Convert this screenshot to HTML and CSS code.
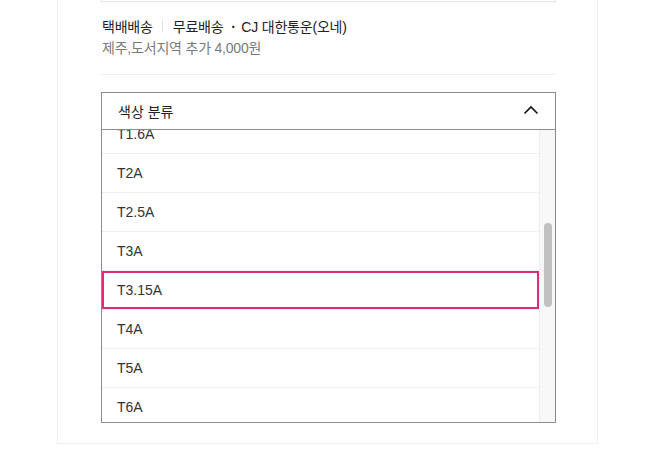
FILE: index.html
```html
<!DOCTYPE html>
<html lang="ko">
<head>
<meta charset="utf-8">
<link rel="stylesheet" href="styles.css">
</head>
<body>
<div class="card">
  <div class="prev-box"></div>
  <div class="delivery">
    <div class="delivery-line">
      <span>택배배송</span><span class="divider"></span><span>무료배송 <span class="dot">·</span> CJ 대한통운(오네)</span>
    </div>
    <div class="delivery-sub">제주,도서지역 추가 4,000원</div>
  </div>
  <div class="select">
    <div class="select-head">
      <span>색상 분류</span>
      <svg class="chevron" width="16" height="10" viewBox="0 0 16 10"><polyline points="1.5,8.5 8,2 14.5,8.5" fill="none" stroke="#111" stroke-width="1.6"/></svg>
    </div>
    <div class="select-body">
      <div class="viewport">
        <ul class="options">
          <li>T1.6A</li>
          <li>T2A</li>
          <li>T2.5A</li>
          <li>T3A</li>
          <li class="active">T3.15A</li>
          <li>T4A</li>
          <li>T5A</li>
          <li>T6A</li>
        </ul>
      </div>
      <div class="track"><div class="thumb"></div></div>
    </div>
  </div>
</div>
</body>
</html>
```
FILE: styles.css
```css
html, body {
  margin: 0;
  padding: 0;
  background: #fff;
}
body {
  font-family: "Liberation Sans", "Noto Sans CJK KR", sans-serif;
  font-size: 14px;
  color: #222;
}
.card {
  box-sizing: border-box;
  width: 541px;
  margin-left: 57px;
  border-left: 1px solid #efefef;
  border-right: 1px solid #efefef;
  border-bottom: 1px solid #efefef;
  padding: 0 41px 20px 43px;
}
.prev-box {
  height: 1px;
  border: 1px solid #e6e6e6;
  border-top: none;
}
.delivery {
  padding: 12px 0 14px 1px;
  border-bottom: 1px solid #eeeeee;
  letter-spacing: -0.2px;
}
.delivery-line {
  display: flex;
  align-items: center;
  height: 23px;
  color: #222;
}
.divider {
  width: 1px;
  height: 13px;
  background: #e3e3e3;
  margin: 0 10px 0 9px;
}
.dot {
  font-weight: bold;
  margin: 0 2px 0 4px;
}
.delivery-sub {
  height: 23px;
  line-height: 23px;
  color: #7a7a7a;
}
.select {
  margin-top: 17px;
  border: 1px solid #8c8c8c;
}
.select-head {
  display: flex;
  align-items: center;
  justify-content: space-between;
  height: 36px;
  padding: 0 16px 0 16px;
  border-bottom: 1px solid #8c8c8c;
  color: #222;
}
.chevron {
  display: block;
  margin-top: -2px;
}
.select-body {
  display: flex;
  height: 292px;
}
.viewport {
  flex: 1;
  overflow: hidden;
}
.options {
  list-style: none;
  margin: -15px 0 0 0;
  padding: 0;
}
.options li {
  height: 38px;
  line-height: 38px;
  padding-left: 15px;
  border-bottom: 1px solid #eeeeee;
  color: #333;
}
.options li.active {
  box-shadow: inset 0 0 0 2px #e3297f;
}
.track {
  box-sizing: border-box;
  width: 16px;
  border-left: 1px solid #ededed;
  background: #f8f8f8;
  padding: 93px 3px 0 4px;
}
.thumb {
  width: 8px;
  height: 84px;
  border-radius: 4px;
  background: #c1c1c1;
}
```
